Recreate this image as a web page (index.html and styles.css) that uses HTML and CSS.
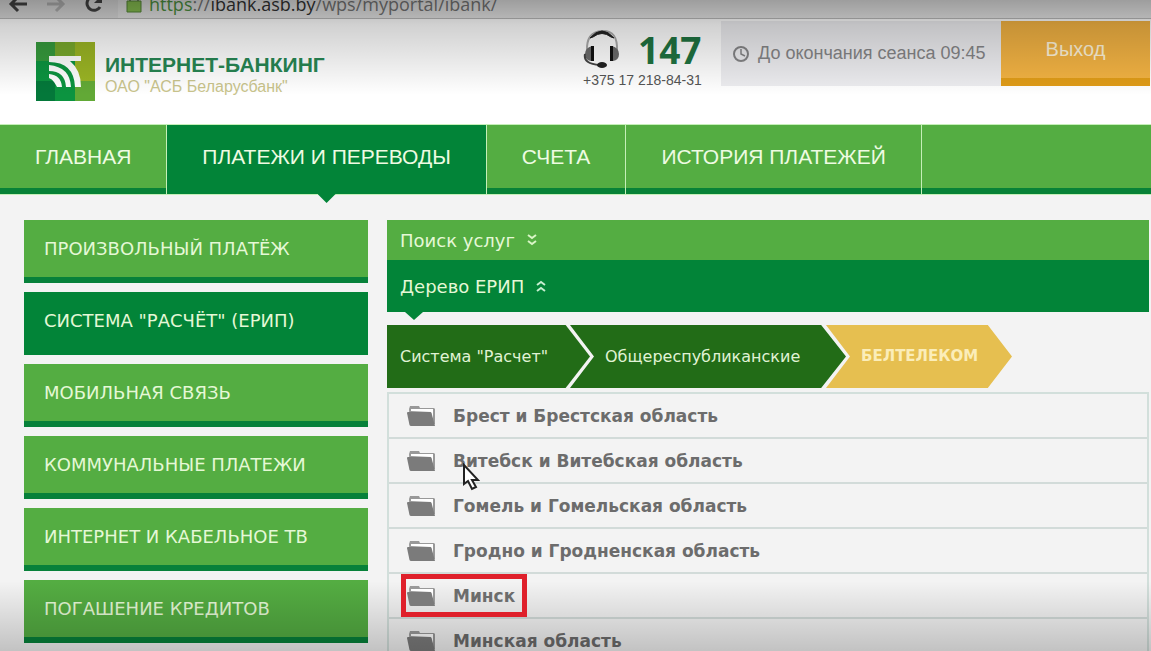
FILE: index.html
```
<!DOCTYPE html>
<html lang="ru">
<head>
<meta charset="utf-8">
<title>Интернет-банкинг</title>
<link rel="stylesheet" href="styles.css">
</head>
<body>
<svg class="defs" width="0" height="0" aria-hidden="true">
  <symbol id="folder" viewBox="0 0 30 24">
    <path d="M2 5 3 2h9l1 2h14l1 1v15l-2 1H3z" fill="#999"/>
    <path d="M4 7V5h22v13L24 8z" fill="#fff"/>
    <path d="M0 9q0-1 1-1h22q1 0 1.500 1L28 22H4q-1 0-1.500-1z" fill="#7b7b7b"/>
  </symbol>
</svg>
<div class="browser">
  <button class="tool" aria-label="Назад"><svg width="20" height="18" viewBox="0 0 20 18"><path d="M19 4H3M10-3 3 4l7 7" fill="none" stroke="#444" stroke-width="3"/></svg></button>
  <button class="tool" aria-label="Вперёд"><svg width="20" height="18" viewBox="0 0 20 18"><path d="M1 4h16M10-3l7 7-7 7" fill="none" stroke="#b4b4b4" stroke-width="3"/></svg></button>
  <button class="tool" aria-label="Обновить"><svg width="20" height="18" viewBox="0 0 20 18"><path d="M13-3A7 7 0 1 0 16 7" fill="none" stroke="#444" stroke-width="3"/><path d="M18-5v8h-8z" fill="#444"/></svg></button>
  <div class="address">
    <svg width="16" height="18" viewBox="0 0 16 18"><path d="M4 3V-1a4 4 0 0 1 8 0v4" fill="none" stroke="#777" stroke-width="2"/><path d="M1 1h14v11H1z" fill="#8ac352" stroke="#568a38"/></svg>
    <span class="url"><span class="secure">https</span>://<b>ibank.asb.by</b>/wps/myportal/ibank/</span>
  </div>
</div>
<header class="header">
  <div class="brand">
    <svg width="59" height="59" viewBox="0 0 59 59">
      <path d="M0 0h59v59H0z" fill="#0c9440"/><path d="M0 0h19v19H0z" fill="#369b3d"/><path d="M19 0h20v19H19z" fill="#78a92c"/><path d="M39 0h20v39H39z" fill="#9bb524"/><path d="M39 39h20v20H39z" fill="#62a936"/><path d="M0 39h19v20H0z" fill="#04783a"/>
      <path d="M13 14h32v5H34q11 9 11 26h-6Q38 20 13 20z" fill="#fff"/>
      <path d="M13 23q21 2 22 22h-5Q29 29 13 29zM13 32q12 1 13 13h-5q-1-2-3-5t-5-4z" fill="#fff"/>
    </svg>
    <div><div class="brand-name">ИНТЕРНЕТ-БАНКИНГ</div><div class="brand-sub">ОАО "АСБ Беларусбанк"</div></div>
  </div>
  <div class="support">
    <div class="support-top">
      <svg width="38" height="40" viewBox="0 0 38 40"><path d="M4 22Q3 3 19 2t15 20" fill="none" stroke="#aaa" stroke-width="2"/><path d="M7 9Q19-5 31 9l-3-1Q19 1 10 8z" fill="#222" stroke="#222" stroke-width="1"/><path d="M9 17h2v15H8q-6-1-6-7t7-8zM29 17h-2v15h3q6-1 6-7t-7-8z" fill="#6b6b6b"/><path d="M8 17h3v15H8zM27 17h3v15h-3z" fill="#111"/><path d="M2 25q-2 10 15 11" fill="none" stroke="#444" stroke-width="2"/><ellipse cx="19" cy="36" rx="5" ry="3" fill="#222"/></svg>
      <b class="short">147</b>
    </div>
    <div class="phone">+375 17 218-84-31</div>
  </div>
  <div class="session"><svg width="18" height="18" viewBox="0 0 18 18"><circle cx="9" cy="9" r="7" fill="none" stroke="#858587" stroke-width="2"/><path d="M9 4v5l4 2" fill="none" stroke="#858587" stroke-width="1.500"/></svg><span>До окончания сеанса 09:45</span></div>
  <button class="logout">Выход</button>
</header>
<nav class="nav">
  <a href="#">ГЛАВНАЯ</a><a href="#" class="active">ПЛАТЕЖИ И ПЕРЕВОДЫ</a><a href="#">СЧЕТА</a><a href="#">ИСТОРИЯ ПЛАТЕЖЕЙ</a><span class="rest"></span>
</nav>
<div class="page">
  <aside class="side">
    <a href="#">ПРОИЗВОЛЬНЫЙ ПЛАТЁЖ</a>
    <a href="#" class="active">СИСТЕМА "РАСЧЁТ" (ЕРИП)</a>
    <a href="#">МОБИЛЬНАЯ СВЯЗЬ</a>
    <a href="#">КОММУНАЛЬНЫЕ ПЛАТЕЖИ</a>
    <a href="#">ИНТЕРНЕТ И КАБЕЛЬНОЕ ТВ</a>
    <a href="#">ПОГАШЕНИЕ КРЕДИТОВ</a>
  </aside>
  <main class="main">
    <button class="panel search">Поиск услуг <svg width="10" height="14" viewBox="0 0 10 14"><path d="m1 2 4 3 4-3M1 8l4 3 4-3" fill="none" stroke="#d9f5c6" stroke-width="2"/></svg></button>
    <button class="panel tree">Дерево ЕРИП <svg width="10" height="14" viewBox="0 0 10 14"><path d="m1 6 4-3 4 3M1 12l4-3 4 3" fill="none" stroke="#c6eed0" stroke-width="2"/></svg></button>
    <div class="crumbs">
      <a href="#" class="crumb first">Система "Расчет"</a><a href="#" class="crumb second">Общереспубликанские</a><a href="#" class="crumb current">БЕЛТЕЛЕКОМ</a>
    </div>
    <ul class="list">
      <li><a href="#"><svg class="folder"><use href="#folder"/></svg>Брест и Брестская область</a></li>
      <li><a href="#"><svg class="folder"><use href="#folder"/></svg>Витебск и Витебская область</a></li>
      <li><a href="#"><svg class="folder"><use href="#folder"/></svg>Гомель и Гомельская область</a></li>
      <li><a href="#"><svg class="folder"><use href="#folder"/></svg>Гродно и Гродненская область</a></li>
      <li><a href="#" class="marked"><svg class="folder"><use href="#folder"/></svg>Минск</a></li>
      <li><a href="#"><svg class="folder"><use href="#folder"/></svg>Минская область</a></li>
    </ul>
  </main>
</div>
<svg class="cursor" width="18" height="28" viewBox="0 0 18 28"><path d="M2 2v19l4-3 4 8 4-2-4-7h6z" fill="#fff" stroke="#222" stroke-width="2"/></svg>
<div class="shade"></div>
</body>
</html>
```
FILE: styles.css
```
* { box-sizing: border-box; }
body { margin: 0; height: 100vh; overflow: hidden; position: relative; display: flex; flex-direction: column; background: #f3f3f3; font-family: "Liberation Sans", Arial, sans-serif; }
a { color: inherit; text-decoration: none; }
button { border: 0; font: inherit; cursor: pointer; }
svg { flex: none; display: block; }
.defs { position: absolute; }
.browser { flex: none; height: 19px; overflow: hidden; display: flex; gap: 18px; padding-left: 8px; background: #dedede; border-bottom: 1px solid #bbb; }
.tool { background: none; padding: 0; height: 18px; }
.address { flex: 1; display: flex; gap: 7px; padding-left: 8px; margin-left: -4px; background: #e8e8e8; }
.url { font: 18px/24px "Open Sans", sans-serif; margin-top: -8px; color: #777; white-space: nowrap; }
.url b { font-weight: 400; color: #333; }
.secure { color: #4e9340; }
.header { flex: none; height: 105px; display: flex; align-items: flex-start; background: #fff; padding: 2px 1px 0 36px; }
.brand { flex: 1; display: flex; gap: 10px; padding-top: 21px; }
.brand-name { margin-top: 10px; font-size: 21px; line-height: 26px; font-weight: 700; color: #278653; white-space: nowrap; }
.brand-sub { font-size: 16px; line-height: 18px; color: #c9c48c; }
.support { width: 138px; padding-top: 8px; }
.support-top { display: flex; gap: 17px; height: 42px; }
.short { font: 700 37px/42px "Open Sans", sans-serif; color: #1f7341; }
.phone { font-size: 14px; line-height: 18px; color: #555; }
.session { height: 65px; width: 280px; display: flex; align-items: center; padding-left: 11px; gap: 8px; background: #ededf0; font-size: 18px; color: #858587; white-space: nowrap; }
.logout { width: 149px; height: 65px; background: #f3b343; border-bottom: 8px solid #e09c18; color: #fff3d8; font-size: 20px; }
.nav { flex: none; height: 71px; display: flex; gap: 1px; background: #c5efb8; padding: 1px 0; font-size: 21px; color: #eefbe2; }
.nav > * { background: #54ad42; border-bottom: 6px solid #078237; padding: 0 35px; line-height: 63px; white-space: nowrap; }
.nav .active { background: #028438; border-color: #028438; position: relative; }
.nav .active::after, .tree::after { content: ""; position: absolute; width: 18px; height: 9px; background: #028438; clip-path: polygon(0 0, 100% 0, 50% 100%); }
.nav .active::after { left: calc(50% - 9px); top: 69px; }
.nav .rest { flex: 1; }
.page { flex: 1; min-height: 0; overflow: hidden; display: flex; gap: 19px; padding: 25px 2px 0 24px; align-items: flex-start; }
.side { width: 344px; flex: none; display: grid; gap: 9px; font-family: "DejaVu Sans", sans-serif; font-size: 18px; color: #e5f8d6; }
.side a { height: 63px; line-height: 57px; padding-left: 20px; background: #54ad42; border-bottom: 6px solid #07813a; white-space: nowrap; }
.side .active { background: #028438; border-color: #028438; }
.main { flex: 1; font-family: "DejaVu Sans", sans-serif; }
.panel { width: 100%; display: flex; align-items: center; gap: 12px; padding: 0 13px; text-align: left; font: 18px "DejaVu Sans", sans-serif; color: #e5f8d6; }
.search { height: 40px; background: #54ad42; }
.tree { height: 52px; background: #028438; position: relative; }
.tree::after { left: 18px; top: 52px; width: 18px; height: 8px; }
.crumbs { display: flex; margin-top: 13px; height: 63px; line-height: 63px; font-size: 16px; color: #e0f3d5; white-space: nowrap; }
.crumb { background: #226c17; }
.first { width: 203px; padding-left: 13px; clip-path: polygon(0 0, 88% 0, 100% 50%, 88% 100%, 0 100%); }
.second { width: 276px; margin-left: -20px; padding-left: 35px; clip-path: polygon(0 0, 91% 0, 100% 50%, 91% 100%, 0 100%, 24px 50%); }
.current { width: 186px; margin-left: -20px; padding-left: 35px; clip-path: polygon(0 0, 87% 0, 100% 50%, 87% 100%, 0 100%, 24px 50%); background: #e6bf50; font-size: 15px; font-weight: 700; color: #fbedb9; }
.list { list-style: none; margin: 4px 0 0; padding: 0; border: 2px solid #d2dfdb; border-bottom: 0; }
.list li { height: 45px; border-bottom: 2px solid #d2dbd9; display: flex; align-items: center; padding-left: 12px; font-size: 17px; font-weight: 700; color: #6c6c6c; }
.list a { display: flex; align-items: center; gap: 16px; height: 43px; padding: 0 12px 0 6px; }
.folder { width: 30px; height: 24px; }
.marked { outline: 5px solid #df202b; outline-offset: -5px; position: relative; z-index: 2; }
.cursor { position: absolute; left: 462px; top: 463px; }
.shade { position: absolute; inset: 0; pointer-events: none; background: linear-gradient(rgba(0,0,0,.32), rgba(0,0,0,.18) 25px, transparent 95px), linear-gradient(transparent calc(100% - 70px), rgba(0,0,0,.2)); }
```
